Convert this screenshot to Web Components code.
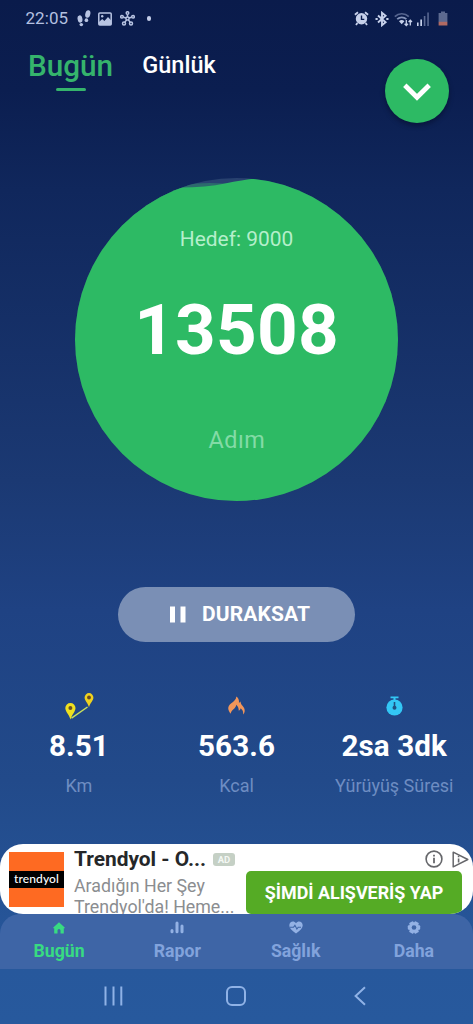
<!DOCTYPE html>
<html lang="tr">
<head>
<meta charset="utf-8">
<title>Adımsayar</title>
<style>
html,body{margin:0;padding:0;overflow:hidden}
body{font-family:Roboto,"Liberation Sans",sans-serif}
</style>
</head>
<body>
<step-app></step-app>
<script>
const define = (name, css, html) => customElements.define(name, class extends HTMLElement {
  constructor() {
    super();
    this.attachShadow({mode: 'open'}).innerHTML = `<style>*{box-sizing:border-box}svg{display:block;flex:none}${css}</style>${html}`;
  }
});

define('status-bar', `
:host{display:flex;height:37px;align-items:center;padding:0 25px 0 25.5px;color:#b4c0e0;font-size:17px;line-height:37px}
.time{width:51px;letter-spacing:.05px;white-space:nowrap}
.gap{flex:1}
.dot{width:4.5px;height:4.5px;border-radius:50%;background:#c3cde8;margin-left:11.5px}
`, `
<span class="time">22:05</span>
<svg width="14" height="17" viewBox="0 0 14 17" fill="#b8c4e2"><ellipse cx="3" cy="9" rx="2.4" ry="3.7" transform="rotate(-12 3 9)"/><ellipse cx="4.3" cy="14.6" rx="1.8" ry="1.7"/><ellipse cx="10.8" cy="4" rx="2.5" ry="3.9" transform="rotate(14 10.8 4)"/><ellipse cx="9.4" cy="10.2" rx="1.8" ry="1.9"/></svg>
<svg width="14" height="14" viewBox="0 0 14 14" style="margin-left:7.5px"><rect x=".8" y=".9" width="12.4" height="12" rx="1" fill="none" stroke="#b8c4e2" stroke-width="1.5"/><path d="M1 10 4.2 7l2.2 2L10 5l3.2 3.6V13H1z" fill="#b8c4e2"/><circle cx="4.2" cy="4.2" r="1.2" fill="#b8c4e2"/></svg>
<svg width="15" height="15" viewBox="0 0 15 15" fill="none" stroke="#b8c4e2" stroke-width="1.5" style="margin-left:8px"><circle cx="7.5" cy="7.5" r="1.6"/><circle cx="7.5" cy="2" r="1.3"/><circle cx="2" cy="5.8" r="1.3"/><circle cx="13" cy="5.8" r="1.3"/><circle cx="4" cy="12.6" r="1.5"/><circle cx="11" cy="12.6" r="1.5"/><path d="M7.5 3.4v2.5M3.4 6.2l2.6.8M11.6 6.2 9 7M4.8 11.4l1.8-2.5M10.2 11.4 8.4 8.9"/></svg>
<span class="dot"></span><span class="gap"></span>
<svg width="15" height="15" viewBox="0 0 15 15" style="margin-right:6px"><circle cx="7.5" cy="7.8" r="5.7" fill="#c6d0ea"/><path d="M3.4 12 2 14M11.6 12 13 14M.9 3.8 4 1.2M14.1 3.8 11 1.2" stroke="#c6d0ea" stroke-width="1.8"/><path d="M7.5 4.4v4h2.8" fill="none" stroke="#0a1c4d" stroke-width="1.4"/></svg>
<svg width="14" height="16" viewBox="0 0 14 16" fill="none" stroke="#c6d0ea" stroke-width="1.9" style="margin-right:5px"><path d="M3 4.5 10.6 11.2 7 14.2V1.8l3.6 3L3 11.5"/><path d="M.5 8h2.2M11.3 8h2.2"/></svg>
<svg width="19" height="16" viewBox="0 0 19 16" fill="none" style="margin-right:4px"><path d="M.8 5.6a10 10 0 0 1 14 0" stroke="#56658f" stroke-width="1.7"/><path d="M3.2 8.2a6.6 6.6 0 0 1 9.2 0" stroke="#8493b9" stroke-width="1.7"/><path d="M5 10.3a4 4 0 0 1 5.4 0L7.7 13.2z" fill="#c6d0ea"/><path d="M12.3 9v5.4M10.6 12.8l1.7 1.8 1.7-1.8M16.3 14.6V9.2M14.6 11l1.7-1.8L18 11" stroke="#c6d0ea" stroke-width="1.3"/></svg>
<svg width="12" height="14" viewBox="0 0 12 14" style="margin-right:9.5px"><path d="M0 10.5h1.6V14H0zM3.3 7.5h1.7V14H3.3z" fill="#c6d0ea"/><path d="M6.8 4h1.6v10H6.8zM10.3.5h1.5V14h-1.5z" fill="#5c6b94"/></svg>
<svg width="10" height="15" viewBox="0 0 10 15"><path d="M3 .5h4V2h2.4v9H.6V2H3z" fill="#5d6a90"/><path d="M.6 10.8h8.8v3.7H.6z" fill="#b06a63"/></svg>
`);

define('top-tabs', `
:host{display:flex;height:104px;align-items:flex-start;padding-left:28px;color:#fff}
.tab{display:flex;flex-direction:column;align-items:center;white-space:nowrap;line-height:36px;padding-top:10.5px}
.on{width:85px;color:#35b46c;font-size:29.7px;font-weight:500}
.on i{width:30px;height:3.5px;border-radius:2px;background:#35b46c;margin-top:4px}
.off{margin-left:29px;width:74px;font-size:23.5px;font-weight:500;padding-top:9.5px}
.fab{margin:21.5px 24px 0 auto;width:64.5px;height:64.5px;border-radius:50%;background:#2dba64;box-shadow:0 3px 5px rgba(0,0,20,.35);display:grid;place-items:center}
`, `
<div class="tab on"><span>Bugün</span><i></i></div>
<div class="tab off"><span>Günlük</span></div>
<div class="fab"><svg width="28" height="20" viewBox="0 0 28 20"><path d="M1.8 4.3 14 16.3 26.2 4.3" fill="none" stroke="#fff" stroke-width="4.8"/></svg></div>
`);

define('step-dial', `
:host{display:grid;width:323px;height:323px;margin:36.8px 0 0 75px;text-align:center;white-space:nowrap}
:host>*{grid-area:1/1}
.txt{display:flex;flex-direction:column;align-items:center}
.goal{margin-top:46.2px;height:30px;line-height:30px;font-size:20.9px;color:#b5efcb}
.num{height:80px;line-height:80px;margin-top:36.5px;font-size:71px;font-weight:700;color:#fff;letter-spacing:.2px}
.unit{height:30px;line-height:30px;margin-top:54.5px;font-size:23.4px;color:#83dba6;letter-spacing:.5px;padding-left:1px}
`, `
<svg width="323" height="323" viewBox="0 0 323 323"><clipPath id="c"><circle cx="161.5" cy="161.5" r="161.5"/></clipPath><g clip-path="url(#c)"><path d="M0 0H323V323H0z" fill="#28416f"/><path d="M0 9 105 7.5Q125 4 150 5.5L185 2V40H0z" fill="#2c6a6d"/><path d="M0 14 104 9.5Q132 9.5 150 5.5 168 1.8 182 .5L323 0V323H0z" fill="#2dba64"/></g></svg>
<div class="txt"><span class="goal"><slot name="goal"></slot></span><span class="num"><slot></slot></span><span class="unit"><slot name="unit"></slot></span></div>
`);

define('pause-button', `
:host{display:flex;width:237px;height:55px;margin:86.2px 0 0 118px;border-radius:28px;background:#7a8fb5;align-items:center;padding-left:51.5px;color:#fff;font-size:21px;font-weight:700;line-height:57px;white-space:nowrap}
.t{margin-left:16.5px;padding-top:1px;letter-spacing:.1px}
`, `<svg width="16" height="17" viewBox="0 0 16 17" fill="#fff"><path d="M0 .5h5v16H0zM10.5.5h5v16h-5z"/></svg><span class="t"><slot></slot></span>`);

define('stat-item', `
:host{display:flex;flex:1 1 0;min-width:0;flex-direction:column;align-items:center;white-space:nowrap}
.ic{height:40px;display:flex;align-items:center}
.v{height:36px;line-height:36px;margin-top:2px;font-size:29.6px;font-weight:700;color:#fff;letter-spacing:.1px}
.l{height:24px;line-height:24px;margin-top:10.5px;font-size:18px;color:#6e8dc2}
`, `<span class="ic"><slot name="icon"></slot></span><span class="v"><slot></slot></span><span class="l"><slot name="label"></slot></span>`);

define('ad-banner', `
:host{display:flex;height:69.5px;background:#fff;border-radius:23px;padding-left:9px;overflow:hidden;white-space:nowrap}
.logo{width:55px;height:55px;margin-top:7.5px;background:#fe6a22;display:flex;align-items:center;flex:none}
.logo span{width:55px;height:17px;background:#000;color:#fff;font:500 12px/15px Lato,sans-serif;text-align:center;letter-spacing:.1px}
.copy{width:163px;margin-left:10px;flex:none}
.head{display:flex;align-items:center;height:30px}
.title{font-size:20.9px;font-weight:700;color:#252729;line-height:30px;width:139px}
.badge{width:22px;height:13.5px;border-radius:3px;background:#c5d0c5;color:#f4f8f4;font-size:9.5px;font-weight:700;line-height:14px;text-align:center}
.d{font-size:17.8px;line-height:20.5px;color:#8b8d90;margin-top:2px}
.side{display:flex;flex-direction:column;width:236px;flex:none}
.info{display:flex;align-items:center;justify-content:flex-end;height:26.5px;padding:3px 4.5px 0 0;gap:8.5px}
.cta{height:43px;width:216px;border-radius:5px;background:#55ab25;color:#fff;font-size:17.9px;font-weight:700;line-height:43px;text-align:center;margin-left:9px}
`, `
<div class="logo"><span>trendyol</span></div>
<div class="copy"><div class="head"><span class="title">Trendyol - O...</span><span class="badge">AD</span></div>
<div class="d">Aradığın Her Şey<br>Trendyol'da! Heme...</div></div>
<div class="side"><div class="info"><svg width="18" height="18" viewBox="0 0 18 18"><circle cx="9" cy="9" r="7.9" fill="none" stroke="#66676b" stroke-width="1.6"/><path d="M8.1 7.8h1.8v5.4H8.1zM8.1 4.8h1.8v1.7H8.1z" fill="#66676b"/></svg><svg width="17" height="17" viewBox="0 0 17 17"><path d="M1.2 1.2 15.8 8.5 1.2 15.8z" fill="none" stroke="#66676b" stroke-width="1.5" stroke-linejoin="round"/><path d="M5.8 7.4h1.6v4H5.8zM5.8 4.8h1.6v1.5H5.8z" fill="#66676b"/></svg></div>
<div class="cta">ŞİMDİ ALIŞVERİŞ YAP</div></div>
`);

define('nav-item', `
:host{display:flex;flex:1 1 0;flex-direction:column;align-items:center;color:#82a3dc;white-space:nowrap}
:host([active]){color:#38db82}
.ic{height:28px;display:flex;align-items:center}
.l{font-size:17.7px;font-weight:700;line-height:18px}
`, `<span class="ic"><slot name="icon"></slot></span><span class="l"><slot></slot></span>`);

define('bottom-nav', `:host{display:flex;height:55px;background:#3e65a6;border-radius:20px 20px 0 0}`, `<slot></slot>`);

define('system-keys', `:host{display:flex;height:55px;align-items:center;padding-left:103.5px}.home{margin:0 108px 0 103px}`, `
<svg width="19" height="20" viewBox="0 0 19 20" stroke="#8fb2e6" stroke-width="2"><path d="M1.5.5v19M9.500.5v19M17.300.5v19"/></svg>
<svg class="home" width="20" height="20" viewBox="0 0 20 20"><rect x="1" y="1" width="18" height="18" rx="5" fill="none" stroke="#8fb2e6" stroke-width="2"/></svg>
<svg width="12" height="20" viewBox="0 0 12 20"><path d="M11 1.2 1.6 10 11 18.8" fill="none" stroke="#8fb2e6" stroke-width="2"/></svg>
`);

define('step-app', `
:host{display:flex;flex-direction:column;width:473px;height:1024px;overflow:hidden;background:linear-gradient(#0a1b4b 0,#0b1e50 90px,#10275c 190px,#1b3973 480px,#1f4283 610px,#224a8a 780px,#27589c 970px,#27599d)}
.stats{display:flex;height:158.5px;margin-top:44px}
ad-banner{flex:none}
`, `
<status-bar></status-bar>
<top-tabs></top-tabs>
<step-dial><span slot="goal">Hedef: 9000</span>13508<span slot="unit">Adım</span></step-dial>
<pause-button>DURAKSAT</pause-button>
<div class="stats">
<stat-item><svg slot="icon" width="30" height="30" viewBox="0 0 30 30"><path d="M7.5 27.2 23.5 16" stroke="#c9e05c" stroke-width="1.5"/><path d="M6.5 28.4C5 23.5 1.3 20.6 1.3 17a5.1 5.1 0 0 1 10.2 0c0 3.6-3.5 6.5-5 11.4z" fill="#efe01f"/><circle cx="6.4" cy="17" r="2" fill="#6b5223"/><path d="M25 16.2C23.8 12 20.6 9.6 20.6 6.5a4.4 4.4 0 0 1 8.8 0c0 3.1-3.2 5.5-4.4 9.7z" fill="#efd21f"/><circle cx="25" cy="6.5" r="1.9" fill="#6b4a23"/></svg>8.51<span slot="label">Km</span></stat-item>
<stat-item><svg slot="icon" width="18" height="19" viewBox="0 0 18 19"><path d="M2.7 17.8C-.9 13.5-.3 10 3 7.4 6.5 5 8.2 3.2 8.300.5c2.3 1.6 3 3.8 2.6 6.5l1.6-1.4c.2 2 .9 3 2.2 4.5 2.7 3.1 2.5 6 .4 8.3.3-2.800-.4-4.300-2.4-6.100-.3 1.200-.9 1.900-1.900 2.400-.1-2.700-.8-4.500-2.600-6-.2 2.200-1.200 3.200-3 4.700-1.600 1.300-2.200 2.500-2.500 4.400z" fill="#f2965a"/></svg>563.6<span slot="label">Kcal</span></stat-item>
<stat-item><svg slot="icon" width="17" height="20" viewBox="0 0 17 20"><path d="M4.500.5h8v1.7H9.5V4h-2V2.2h-3z" fill="#33c7f5"/><circle cx="8.5" cy="11.5" r="8.1" fill="#33c7f5"/><path d="M8.5 6v5" stroke="#205182" stroke-width="1.6"/><circle cx="8.5" cy="11.8" r="2" fill="#205182"/></svg>2sa 3dk<span slot="label">Yürüyüş Süresi</span></stat-item>
</div>
<ad-banner></ad-banner>
<bottom-nav>
<nav-item active><svg slot="icon" width="12" height="12" viewBox="0 0 12 12"><path d="M6 .3.3 5.4c-.3.6 0 .9.5.9H1.2V11.5H4.5V8.5a1.5 1.5 0 0 1 3 0v3H10.8V6.3h.4c.5 0 .8-.3.5-.9z" fill="#38db82"/></svg>Bugün</nav-item>
<nav-item><svg slot="icon" width="14" height="13" viewBox="0 0 14 13" stroke="#93b1e4" stroke-width="3" stroke-linecap="round"><path d="M2 9.500v1.300M7 2v8.800M12 5v5.800"/></svg>Rapor</nav-item>
<nav-item><svg slot="icon" width="14" height="13" viewBox="0 0 14 13"><path d="M7 12.5C2.5 9.5.3 6.8.3 4.2.3.4 5-.8 7 2.2 9-.8 13.7.4 13.7 4.2c0 2.6-2.2 5.3-6.7 8.3z" fill="#93b1e4"/><path d="M1 6.2h3.5l1.4-2 2 3.8 1.3-1.8H12" fill="none" stroke="#3e65a6" stroke-width="1.1"/></svg>Sağlık</nav-item>
<nav-item><svg slot="icon" width="14" height="13" viewBox="0 0 14 13"><g fill="#93b1e4"><circle cx="7" cy="6.5" r="5"/><rect x="4.7" y=".3" width="4.6" height="12.4" rx="1" transform="rotate(30 7 6.5)"/><rect x="4.7" y=".3" width="4.6" height="12.4" rx="1" transform="rotate(90 7 6.5)"/><rect x="4.7" y=".3" width="4.6" height="12.4" rx="1" transform="rotate(150 7 6.5)"/></g><circle cx="7" cy="6.5" r="2.3" fill="#3e65a6"/></svg>Daha</nav-item>
</bottom-nav>
<system-keys></system-keys>
`);
</script>
</body>
</html>
